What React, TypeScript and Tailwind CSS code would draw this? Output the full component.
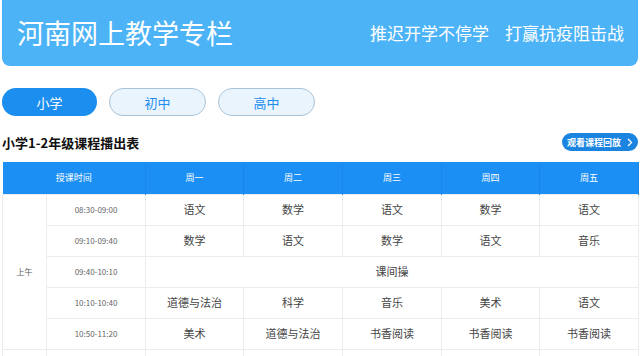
import type { FC } from 'react';

const DAYS = ['周一', '周二', '周三', '周四', '周五'];

const ROWS: { time: string; subjects: string[] | null }[] = [
  { time: '08:30-09:00', subjects: ['语文', '数学', '语文', '数学', '语文'] },
  { time: '09:10-09:40', subjects: ['数学', '语文', '数学', '语文', '音乐'] },
  { time: '09:40-10:10', subjects: null },
  { time: '10:10-10:40', subjects: ['道德与法治', '科学', '音乐', '美术', '语文'] },
  { time: '10:50-11:20', subjects: ['美术', '道德与法治', '书香阅读', '书香阅读', '书香阅读'] },
];

const FONT = "font-['Noto_Sans_CJK_SC','Noto_Sans',sans-serif]";

const App: FC = () => {
  return (
    <div className={`w-[640px] h-[356px] overflow-hidden bg-white ${FONT}`}>
      {/* Banner */}
      <div className="mx-[2px] h-[66px] rounded-b-[8px] bg-[#4cb3f7] flex items-center justify-between pl-[15px] pr-[14px]">
        <h1 className="text-white text-[27px] leading-none pb-[2px]">河南网上教学专栏</h1>
        <p className="text-white text-[17px] leading-none flex gap-[16px] pb-[2px]">
          <span>推迟开学不停学</span>
          <span>打赢抗疫阻击战</span>
        </p>
      </div>

      {/* Tabs */}
      <div className="flex gap-[12px] pl-[2px] mt-[22px]">
        <button className="w-[95px] h-[28px] rounded-full bg-[#1b8ef0] text-white text-[13px] leading-none">小学</button>
        <button className="w-[97px] h-[28px] rounded-full bg-[#eaf4fd] border border-[#a9c4d8] text-[#1b8ef0] text-[13px] leading-none">初中</button>
        <button className="w-[97px] h-[28px] rounded-full bg-[#eaf4fd] border border-[#a9c4d8] text-[#1b8ef0] text-[13px] leading-none">高中</button>
      </div>

      {/* Title row */}
      <div className="flex items-center justify-between pl-[2px] pr-[2px] mt-[17px]">
        <h2 className="text-[13px] font-bold text-[#111] leading-none">小学1-2年级课程播出表</h2>
        <button className="h-[18px] w-[76px] rounded-full bg-[#1a84e0] text-white text-[9px] font-bold leading-none flex items-center justify-center gap-[6px]">
          <span>观看课程回放</span>
          <svg width="6" height="9" viewBox="0 0 6 9" fill="none">
            <path d="M1 1l3.5 3.5L1 8" stroke="white" strokeWidth="1.3" />
          </svg>
        </button>
      </div>

      {/* Table */}
      <table className="ml-[2px] mt-[11px] w-[636px] border-collapse table-fixed">
        <colgroup>
          <col className="w-[44px]" />
          <col className="w-[99px]" />
          <col className="w-[98px]" />
          <col className="w-[99px]" />
          <col className="w-[99px]" />
          <col className="w-[98px]" />
          <col className="w-[99px]" />
        </colgroup>
        <thead>
          <tr className="bg-[#1c8ff4] h-[32px]">
            <th colSpan={2} className="text-white text-[9px] font-normal border-r border-[#1a86e6]">授课时间</th>
            {DAYS.map((d) => (
              <th key={d} className="text-white text-[9px] font-normal border-r border-[#1a86e6]">
                {d}
              </th>
            ))}
          </tr>
        </thead>
        <tbody>
          {ROWS.map((row, i) => (
            <tr key={row.time} className="h-[31px]">
              {i === 0 && (
                <td rowSpan={5} className="border border-[#ececec] text-center text-[8px] text-[#555]">
                  上午
                </td>
              )}
              <td className="border border-[#ececec] text-center text-[8px] text-[#666]">{row.time}</td>
              {row.subjects ? (
                row.subjects.map((s, j) => (
                  <td key={j} className="border border-[#ececec] text-center text-[11px] text-[#444]">
                    {s}
                  </td>
                ))
              ) : (
                <td colSpan={5} className="border border-[#ececec] text-center text-[11px] text-[#444]">
                  课间操
                </td>
              )}
            </tr>
          ))}
          <tr className="h-[31px]">
            {Array.from({ length: 7 }).map((_, j) => (
              <td key={j} className="border border-[#ececec]" />
            ))}
          </tr>
        </tbody>
      </table>
    </div>
  );
};

export default App;
